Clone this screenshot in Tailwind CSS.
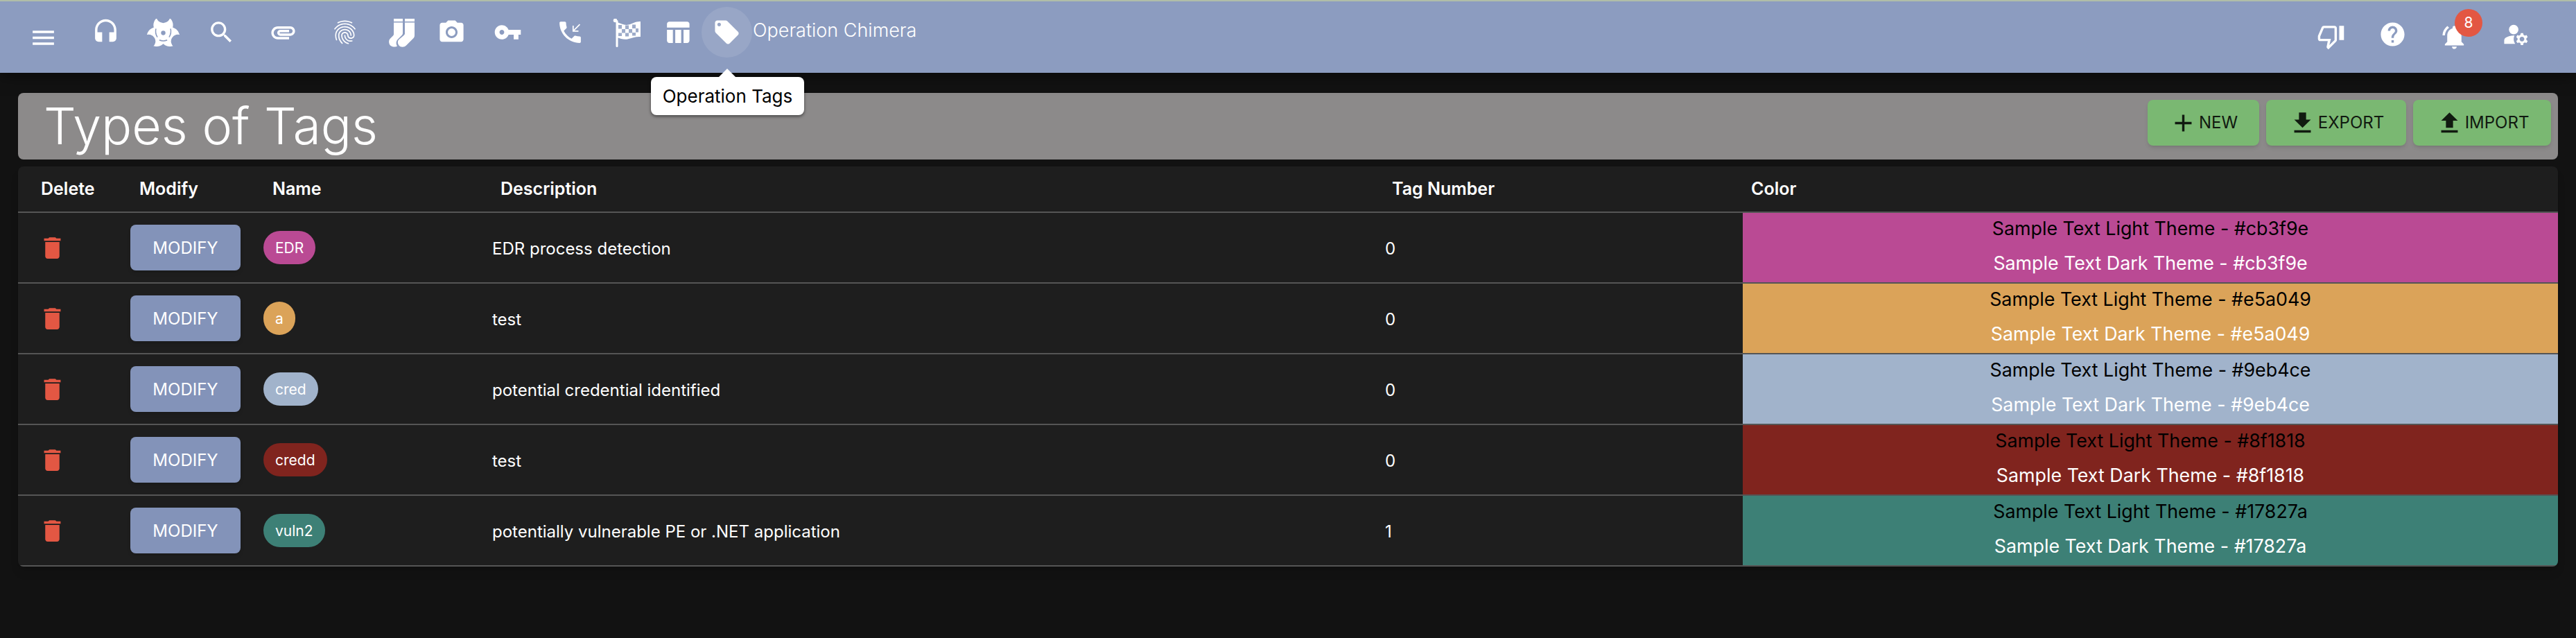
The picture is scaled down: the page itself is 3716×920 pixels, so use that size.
<!DOCTYPE html>
<html lang="en">
<head>
    <meta charset="UTF-8">
    <title>Types of Tags</title>
    <script src="https://cdn.jsdelivr.net/npm/@tailwindcss/browser@4"></script>
</head>
<body class="bg-[#121212] min-h-screen overflow-hidden font-['Inter',sans-serif] text-white">
    <!-- App bar -->
    <header class="relative z-10 h-[105px] border-t-2 border-[#b0bda8] bg-[#8c9cc0] shadow-[0_4px_20px_rgba(0,0,0,0.5)] flex items-center pb-[14px] pl-[20px] pr-[42px] text-white">
        <div class="w-[84px] flex justify-center"><svg class="w-[41px] h-[41px] mt-[16px] fill-current" viewBox="0 0 24 24"><path d="M3 18h18v-2H3v2zm0-5h18v-2H3v2zm0-7v2h18V6H3z"/></svg></div>
        <div class="w-[96px] flex justify-center"><svg class="w-[41px] h-[41px] fill-current" viewBox="0 0 24 24"><path d="M12 1c-4.97 0-9 4.03-9 9v7c0 1.66 1.34 3 3 3h3v-8H5v-2c0-3.87 3.13-7 7-7s7 3.13 7 7v2h-4v8h3c1.66 0 3-1.34 3-3v-7c0-4.97-4.03-9-9-9z"/></svg></div>
        <div class="w-[70px] flex justify-center">
            <svg class="w-[47px] h-[40px] mt-[1px] fill-current" viewBox="-12.500 -11 25 21.500" preserveAspectRatio="none">
                <defs>
                    <mask id="lobes" maskUnits="userSpaceOnUse" x="-16" y="-16" width="32" height="32">
                        <circle cy="-6" r="7.500" fill="white"/>
                        <circle cy="-6" r="7.500" fill="white" transform="rotate(120)"/>
                        <circle cy="-6" r="7.500" fill="white" transform="rotate(240)"/>
                        <circle cy="-13" r="5.300" fill="black"/>
                        <circle cy="-13" r="5.300" fill="black" transform="rotate(120)"/>
                        <circle cy="-13" r="5.300" fill="black" transform="rotate(240)"/>
                        <circle r="1.700" fill="black"/>
                        <path d="M-5.600 -3.300Q-6.500 0 -4.500 3.300" fill="none" stroke="black" stroke-width="0.800"/>
                        <path d="M5.600 -3.300Q6.500 0 4.500 3.300" fill="none" stroke="black" stroke-width="0.800"/>
                        <path d="M-3 5.500Q0 6.800 3 5.500" fill="none" stroke="black" stroke-width="0.800"/>
                    </mask>
                </defs>
                <rect x="-16" y="-16" width="32" height="32" mask="url(#lobes)"/>
            </svg>
        </div>
        <div class="w-[98px] flex justify-center"><svg class="w-[41px] h-[41px] fill-current" viewBox="0 0 24 24"><path d="M15.5 14h-.79l-.28-.27C15.41 12.59 16 11.11 16 9.5 16 5.91 13.09 3 9.5 3S3 5.91 3 9.5 5.91 16 9.5 16c1.61 0 3.09-.59 4.23-1.57l.27.28v.79l5 4.99L20.49 19l-4.99-5zm-6 0C7.01 14 5 11.99 5 9.5S7.01 5 9.5 5 14 7.01 14 9.5 11.99 14 9.5 14z"/></svg></div>
        <div class="w-[80px] flex justify-center"><svg class="w-[41px] h-[41px] fill-current" viewBox="0 0 24 24"><path d="M2 12.5C2 9.46 4.46 7 7.5 7H18c2.21 0 4 1.79 4 4s-1.79 4-4 4H9.5C8.12 15 7 13.88 7 12.5S8.12 10 9.5 10H17v2H9.41c-.55 0-.55 1 0 1H18c1.1 0 2-.9 2-2s-.9-2-2-2H7.5C5.57 9 4 10.57 4 12.5S5.57 16 7.5 16H17v2H7.5C4.46 18 2 15.54 2 12.5z"/></svg></div>
        <div class="w-[98px] flex justify-center"><svg class="w-[41px] h-[41px] fill-current" viewBox="0 0 24 24"><path d="M17.81 4.47c-.08 0-.16-.02-.23-.06C15.66 3.42 14 3 12.01 3c-1.98 0-3.86.47-5.57 1.41-.24.13-.54.04-.68-.2-.13-.24-.04-.55.2-.68C7.82 2.52 9.86 2 12.01 2c2.13 0 3.99.47 6.03 1.52.25.13.34.43.21.67-.09.18-.26.28-.44.28zM3.5 9.72c-.1 0-.2-.03-.29-.09-.23-.16-.28-.47-.12-.7.99-1.4 2.25-2.5 3.75-3.27C9.98 4.04 14 4.03 17.15 5.65c1.5.77 2.76 1.86 3.75 3.25.16.22.11.54-.12.7-.23.16-.54.11-.7-.12-.9-1.26-2.04-2.25-3.39-2.94-2.87-1.47-6.54-1.47-9.4.01-1.36.7-2.5 1.7-3.4 2.96-.08.14-.23.21-.39.21zm6.25 12.07c-.13 0-.26-.05-.35-.15-.87-.87-1.34-1.43-2.01-2.64-.69-1.23-1.05-2.73-1.05-4.34 0-2.97 2.54-5.39 5.66-5.39s5.66 2.42 5.66 5.39c0 .28-.22.5-.5.5s-.5-.22-.5-.5c0-2.42-2.09-4.39-4.66-4.39s-4.66 1.97-4.66 4.39c0 1.44.32 2.77.93 3.85.64 1.15 1.08 1.64 1.85 2.42.19.2.19.51 0 .71-.11.1-.24.15-.37.15zm7.17-1.85c-1.19 0-2.24-.3-3.1-.89-1.49-1.01-2.38-2.65-2.38-4.39 0-.28.22-.5.5-.5s.5.22.5.5c0 1.41.72 2.74 1.94 3.56.71.48 1.54.71 2.54.71.24 0 .64-.03 1.04-.1.27-.05.53.13.58.41.05.27-.13.53-.41.58-.57.11-1.07.12-1.21.12zM14.91 22c-.04 0-.09-.01-.13-.02-1.59-.44-2.63-1.03-3.72-2.1-1.4-1.39-2.17-3.24-2.17-5.22 0-1.62 1.38-2.94 3.08-2.94s3.08 1.32 3.08 2.94c0 1.07.93 1.94 2.08 1.94s2.08-.87 2.08-1.94c0-3.77-3.25-6.83-7.25-6.83-2.84 0-5.44 1.58-6.61 4.03-.39.81-.59 1.76-.59 2.8 0 .78.07 2.01.67 3.61.1.26-.03.55-.29.64-.26.1-.55-.04-.64-.29-.49-1.31-.73-2.61-.73-3.96 0-1.2.23-2.29.68-3.24 1.33-2.79 4.28-4.6 7.51-4.6 4.55 0 8.25 3.51 8.25 7.83 0 1.62-1.38 2.94-3.08 2.94s-3.08-1.32-3.08-2.94c0-1.07-.93-1.94-2.08-1.94s-2.08.87-2.08 1.94c0 1.71.66 3.31 1.87 4.51.95.94 1.86 1.46 3.27 1.85.27.07.42.35.35.61-.05.23-.26.38-.47.38z"/></svg></div>
        <div class="w-[64px] flex justify-center"><svg class="w-[41px] h-[41px] mt-[2px] fill-current" viewBox="0 0 41 41"><path d="M10 0h13v4H10zM26 0h14v4H26z"/><path d="M26 5.5H40V24c0 2-1 3.5-2 4.5L28 38.5c-3 3-8 3-10.500 0s-2-7 .5-9l6-5c1-1 2-2 2-3z"/><path d="M10 5.500H23V21c0 1.500-1 2.500-2 3.500l-5 5c-3 3-3 7-1 10-3 2-8 1-10-1s-3-7 0-10l4-4c1-1 1-2 1-3z"/></svg></div>
        <div class="w-[82px] flex justify-center"><svg class="w-[41px] h-[41px] fill-current" viewBox="0 0 24 24"><circle cx="12" cy="12" r="3.2"/><path d="M9 2 7.170 4H4c-1.100 0-2 .9-2 2v12c0 1.100.9 2 2 2h16c1.100 0 2-.9 2-2V6c0-1.100-.9-2-2-2h-3.170L15 2H9zm3 15c-2.760 0-5-2.240-5-5s2.240-5 5-5 5 2.240 5 5-2.240 5-5 5z"/></svg></div>
        <div class="w-[80px] flex justify-center"><svg class="w-[41px] h-[41px] fill-current" viewBox="0 0 24 24"><path d="M12.650 10C11.830 7.670 9.610 6 7 6c-3.310 0-6 2.690-6 6s2.690 6 6 6c2.610 0 4.830-1.670 5.650-4H17v4h4v-4h2v-4H12.650zM7 14c-1.100 0-2-.9-2-2s.9-2 2-2 2 .9 2 2-.9 2-2 2z"/></svg></div>
        <div class="w-[100px] flex justify-center"><svg class="w-[41px] h-[41px] fill-current" viewBox="0 0 24 24"><path d="M20 15.500c-1.250 0-2.450-.2-3.570-.57-.35-.11-.74-.03-1.020.24l-2.200 2.200c-2.830-1.440-5.150-3.750-6.590-6.590l2.200-2.210c.28-.26.36-.65.25-1C8.700 6.450 8.500 5.250 8.500 4c0-.55-.45-1-1-1H4c-.55 0-1 .45-1 1 0 9.390 7.610 17 17 17 .55 0 1-.45 1-1v-3.500c0-.55-.45-1-1-1zM19 11.500 19 10.500 15.700 10.500 20.500 5.700 19.800 5 15 9.800 15 6.500 14 6.500 14 11.500z"/></svg></div>
        <div class="w-[64px] flex justify-center">
            <svg class="w-[41px] h-[41px] mt-[2px] fill-current" viewBox="0 0 41 41">
                <circle cx="3.500" cy="2.500" r="2.800"/>
                <rect x="4.500" y="2" width="3" height="39" rx="1.500"/>
                <path d="M6 5c6 2 11 5 17 3.500S33 3.500 40 4V26c-6-.5-11 1-17 3s-11 0-17-2z"/>
                <g fill="#8c9cc0" fill-opacity="0.85">
                    <rect x="8" y="9" width="5" height="5.500"/><rect x="18" y="9.500" width="5" height="5.500"/><rect x="28" y="8.500" width="5" height="5.500"/>
                    <rect x="13" y="15" width="5" height="5.500"/><rect x="23" y="15" width="5" height="5.500"/><rect x="33" y="14" width="4" height="5.500"/>
                    <rect x="8" y="20.500" width="5" height="4.500"/><rect x="18" y="20.500" width="5" height="5"/><rect x="28" y="20" width="5" height="4.500"/>
                </g>
            </svg>
        </div>
        <div class="w-[82px] flex justify-center"><svg class="w-[41px] h-[41px] fill-current" viewBox="0 0 24 24"><path d="M10 10.020h5V21h-5zM17 21h3c1.100 0 2-.9 2-2v-9h-5v11zm3-18H5c-1.100 0-2 .9-2 2v3h19V5c0-1.100-.9-2-2-2zM3 19c0 1.100.9 2 2 2h3V10H3v9z"/></svg></div>
        <div class="w-[73px] h-[73px] ml-[-6px] rounded-full bg-white/10 flex items-center justify-center"><svg class="w-[41px] h-[41px] fill-current" viewBox="0 0 24 24"><path d="M21.410 11.580l-9-9C12.050 2.220 11.550 2 11 2H4c-1.100 0-2 .9-2 2v7c0 .55.22 1.050.59 1.420l9 9c.36.36.86.58 1.410.58.55 0 1.050-.22 1.410-.59l7-7c.37-.36.59-.86.59-1.410 0-.55-.23-1.060-.59-1.420zM5.500 7C4.670 7 4 6.330 4 5.500S4.670 4 5.500 4 7 4.670 7 5.500 6.330 7 5.500 7z"/></svg></div>
        <div class="ml-[1px] mb-[4px] text-[27px] font-light">Operation Chimera</div>
        <!-- Tooltip -->
        <div class="absolute left-[939px] top-[109px] w-[221px] h-[55px] rounded-lg bg-white text-black text-[26px] flex items-center justify-center shadow-[0_2px_4px_rgba(0,0,0,0.5)]">
            <span class="absolute -top-[12px] left-[98px] w-0 h-0 border-x-[12px] border-x-transparent border-b-[12px] border-b-white"></span>
            Operation Tags
        </div>
        <div class="ml-auto flex items-center">
            <div class="w-[89px] flex justify-center"><svg class="w-[41px] h-[41px] mt-[12px] fill-current" viewBox="0 0 24 24"><path d="M15 3H6c-.83 0-1.540.5-1.840 1.220l-3.020 7.050c-.09.23-.14.47-.14.73v2c0 1.100.9 2 2 2h6.310l-.95 4.570-.03.32c0 .41.17.79.44 1.060L9.830 23l6.590-6.590c.36-.36.58-.86.58-1.410V5c0-1.100-.9-2-2-2zm0 12-4.340 4.340L12 14H3v-2l3-7h9v10zm4-12h4v12h-4z"/></svg></div>
            <div class="w-[89px] flex justify-center"><svg class="w-[41px] h-[41px] mt-[5px] fill-current" viewBox="0 0 24 24"><path d="M12 2C6.480 2 2 6.480 2 12s4.480 10 10 10 10-4.480 10-10S17.520 2 12 2zm1 17h-2v-2h2v2zm2.070-7.750-.9.92C13.450 12.900 13 13.500 13 15h-2v-.5c0-1.100.45-2.100 1.170-2.830l1.240-1.260c.37-.36.59-.86.59-1.410 0-1.100-.9-2-2-2s-2 .9-2 2H8c0-2.210 1.790-4 4-4s4 1.790 4 4c0 .88-.36 1.680-.93 2.250z"/></svg></div>
            <div class="relative w-[89px] flex justify-center">
                <svg class="w-[41px] h-[41px] mt-[14px] fill-current" viewBox="0 0 24 24"><path d="M7.580 4.080 6.150 2.650C3.750 4.480 2.170 7.300 2.030 10.500h2c.15-2.650 1.510-4.970 3.550-6.420zM18 11c0-3.070-1.640-5.640-4.500-6.320V4c0-.83-.67-1.500-1.500-1.500s-1.500.67-1.500 1.500v.68C7.630 5.360 6 7.920 6 11v5l-2 2v1h16v-1l-2-2v-5zm-6 11c.14 0 .27-.01.4-.04.65-.14 1.180-.58 1.440-1.180.1-.24.15-.5.15-.78h-4c.01 1.100.9 2 2.010 2z"/></svg>
                <span class="absolute left-[45px] top-[-6px] w-[40px] h-[40px] rounded-full bg-[#e35743] text-white text-[21px] flex items-center justify-center">8</span>
            </div>
            <div class="w-[89px] flex justify-center"><svg class="w-[41px] h-[41px] mt-[5px] fill-current" viewBox="0 0 24 24"><circle cx="10" cy="8" r="4"/><path d="M10.670 13.020c-.22-.01-.44-.02-.67-.02-2.420 0-4.680.67-6.610 1.820-.88.52-1.390 1.500-1.390 2.530V20h9.260c-.79-1.130-1.260-2.510-1.260-4 0-1.070.25-2.070.67-2.980z"/><path d="M20.750 16c0-.22-.03-.42-.06-.63l1.140-1.010-1-1.730-1.450.49c-.32-.27-.68-.48-1.080-.63L18 11h-2l-.3 1.490c-.4.15-.76.36-1.080.63l-1.450-.49-1 1.730 1.140 1.010c-.03.21-.06.41-.06.63s.03.42.06.63l-1.140 1.010 1 1.730 1.450-.49c.32.27.68.48 1.080.63L16 21h2l.3-1.490c.4-.15.76-.36 1.080-.63l1.450.49 1-1.730-1.140-1.010c.03-.21.06-.41.06-.63zM17 18c-1.100 0-2-.9-2-2s.9-2 2-2 2 .9 2 2-.9 2-2 2z"/></svg></div>
        </div>
    </header>

    <main class="px-[26px] pt-[29px]">
        <!-- Title bar -->
        <div class="h-[96px] rounded-lg bg-[#8c8a8a] flex items-start pl-[37px] pr-[10px] mb-[10px]">
            <h1 class="text-[73.500px] font-light leading-none mt-[11px]">Types of Tags</h1>
            <div class="ml-auto mt-[10px] flex gap-[10px] text-[#111a10] text-[24px] font-normal">
                <button class="w-[161px] h-[66px] rounded-lg bg-[#7ab872] shadow-md flex items-center justify-center gap-[2px]"><svg class="w-[41px] h-[41px] fill-current" viewBox="0 0 24 24"><path d="M19 13h-6v6h-2v-6H5v-2h6V5h2v6h6v2z"/></svg>NEW</button>
                <button class="w-[202px] h-[66px] rounded-lg bg-[#7ab872] shadow-md flex items-center justify-center gap-[2px]"><svg class="w-[41px] h-[41px] fill-current" viewBox="0 0 24 24"><path d="M19 9h-4V3H9v6H5l7 7 7-7zM5 18v2h14v-2H5z"/></svg>EXPORT</button>
                <button class="w-[199px] h-[66px] rounded-lg bg-[#7ab872] shadow-md flex items-center justify-center gap-[2px]"><svg class="w-[41px] h-[41px] fill-current" viewBox="0 0 24 24"><path d="M9 16h6v-6h4l-7-7-7 7h4v6zm-4 2h14v2H5v-2z"/></svg>IMPORT</button>
            </div>
        </div>

        <!-- Table -->
        <div class="rounded-lg overflow-hidden bg-[#1e1e1e] text-[24px] shadow-lg">
            <div class="grid grid-cols-[162px_192px_330px_1288px_516px_1176px] h-[67px] items-center border-b-2 border-[#555] font-semibold text-[25px]">
                <div class="pl-[33px]">Delete</div>
                <div class="pl-[13px]">Modify</div>
                <div class="pl-[13px]">Name</div>
                <div class="pl-[12px]">Description</div>
                <div class="pl-[10px]">Tag Number</div>
                <div class="pl-[12px]">Color</div>
            </div>

            <div class="grid grid-cols-[162px_192px_330px_1288px_516px_1176px] h-[102px] items-center border-b-2 border-[#555]">
                <div class="pl-[29px]"><svg class="w-[41px] h-[41px] fill-[#e35743]" viewBox="0 0 24 24"><path d="M6 19c0 1.100.9 2 2 2h8c1.100 0 2-.9 2-2V7H6v12zM19 4h-3.500l-1-1h-5l-1 1H5v2h14V4z"/></svg></div>
                <div><button class="w-[159px] h-[66px] pt-[2px] rounded-lg bg-[#8393b9] shadow-md">MODIFY</button></div>
                <div><span class="inline-flex items-center h-[48px] px-[17px] pt-[1px] rounded-full bg-[#ba4a94] text-[21px]">EDR</span></div>
                <div class="pt-[3px]">EDR process detection</div>
                <div class="pt-[3px]">0</div>
                <div class="h-full bg-[#ba4a94] grid grid-rows-[50px_50px] text-center leading-[44px] text-[26.8px]"><div class="text-black">Sample Text Light Theme - #cb3f9e</div><div>Sample Text Dark Theme - #cb3f9e</div></div>
            </div>

            <div class="grid grid-cols-[162px_192px_330px_1288px_516px_1176px] h-[102px] items-center border-b-2 border-[#555]">
                <div class="pl-[29px]"><svg class="w-[41px] h-[41px] fill-[#e35743]" viewBox="0 0 24 24"><path d="M6 19c0 1.100.9 2 2 2h8c1.100 0 2-.9 2-2V7H6v12zM19 4h-3.500l-1-1h-5l-1 1H5v2h14V4z"/></svg></div>
                <div><button class="w-[159px] h-[66px] pt-[2px] rounded-lg bg-[#8393b9] shadow-md">MODIFY</button></div>
                <div><span class="inline-flex items-center h-[48px] px-[17px] pt-[1px] rounded-full bg-[#dba359] text-[21px]">a</span></div>
                <div class="pt-[3px]">test</div>
                <div class="pt-[3px]">0</div>
                <div class="h-full bg-[#dba359] grid grid-rows-[50px_50px] text-center leading-[44px] text-[26.8px]"><div class="text-black">Sample Text Light Theme - #e5a049</div><div>Sample Text Dark Theme - #e5a049</div></div>
            </div>

            <div class="grid grid-cols-[162px_192px_330px_1288px_516px_1176px] h-[102px] items-center border-b-2 border-[#555]">
                <div class="pl-[29px]"><svg class="w-[41px] h-[41px] fill-[#e35743]" viewBox="0 0 24 24"><path d="M6 19c0 1.100.9 2 2 2h8c1.100 0 2-.9 2-2V7H6v12zM19 4h-3.500l-1-1h-5l-1 1H5v2h14V4z"/></svg></div>
                <div><button class="w-[159px] h-[66px] pt-[2px] rounded-lg bg-[#8393b9] shadow-md">MODIFY</button></div>
                <div><span class="inline-flex items-center h-[48px] px-[17px] pt-[1px] rounded-full bg-[#a1b3cb] text-[21px]">cred</span></div>
                <div class="pt-[3px]">potential credential identified</div>
                <div class="pt-[3px]">0</div>
                <div class="h-full bg-[#a1b3cb] grid grid-rows-[50px_50px] text-center leading-[44px] text-[26.8px]"><div class="text-black">Sample Text Light Theme - #9eb4ce</div><div>Sample Text Dark Theme - #9eb4ce</div></div>
            </div>

            <div class="grid grid-cols-[162px_192px_330px_1288px_516px_1176px] h-[102px] items-center border-b-2 border-[#555]">
                <div class="pl-[29px]"><svg class="w-[41px] h-[41px] fill-[#e35743]" viewBox="0 0 24 24"><path d="M6 19c0 1.100.9 2 2 2h8c1.100 0 2-.9 2-2V7H6v12zM19 4h-3.500l-1-1h-5l-1 1H5v2h14V4z"/></svg></div>
                <div><button class="w-[159px] h-[66px] pt-[2px] rounded-lg bg-[#8393b9] shadow-md">MODIFY</button></div>
                <div><span class="inline-flex items-center h-[48px] px-[17px] pt-[1px] rounded-full bg-[#80241e] text-[21px]">credd</span></div>
                <div class="pt-[3px]">test</div>
                <div class="pt-[3px]">0</div>
                <div class="h-full bg-[#80241e] grid grid-rows-[50px_50px] text-center leading-[44px] text-[26.8px]"><div class="text-black">Sample Text Light Theme - #8f1818</div><div>Sample Text Dark Theme - #8f1818</div></div>
            </div>

            <div class="grid grid-cols-[162px_192px_330px_1288px_516px_1176px] h-[102px] items-center border-b-2 border-[#555]">
                <div class="pl-[29px]"><svg class="w-[41px] h-[41px] fill-[#e35743]" viewBox="0 0 24 24"><path d="M6 19c0 1.100.9 2 2 2h8c1.100 0 2-.9 2-2V7H6v12zM19 4h-3.500l-1-1h-5l-1 1H5v2h14V4z"/></svg></div>
                <div><button class="w-[159px] h-[66px] pt-[2px] rounded-lg bg-[#8393b9] shadow-md">MODIFY</button></div>
                <div><span class="inline-flex items-center h-[48px] px-[17px] pt-[1px] rounded-full bg-[#3d8076] text-[21px]">vuln2</span></div>
                <div class="pt-[3px]">potentially vulnerable PE or .NET application</div>
                <div class="pt-[3px]">1</div>
                <div class="h-full bg-[#3d8076] grid grid-rows-[50px_50px] text-center leading-[44px] text-[26.8px]"><div class="text-black">Sample Text Light Theme - #17827a</div><div>Sample Text Dark Theme - #17827a</div></div>
            </div>
        </div>
    </main>
</body>
</html>
